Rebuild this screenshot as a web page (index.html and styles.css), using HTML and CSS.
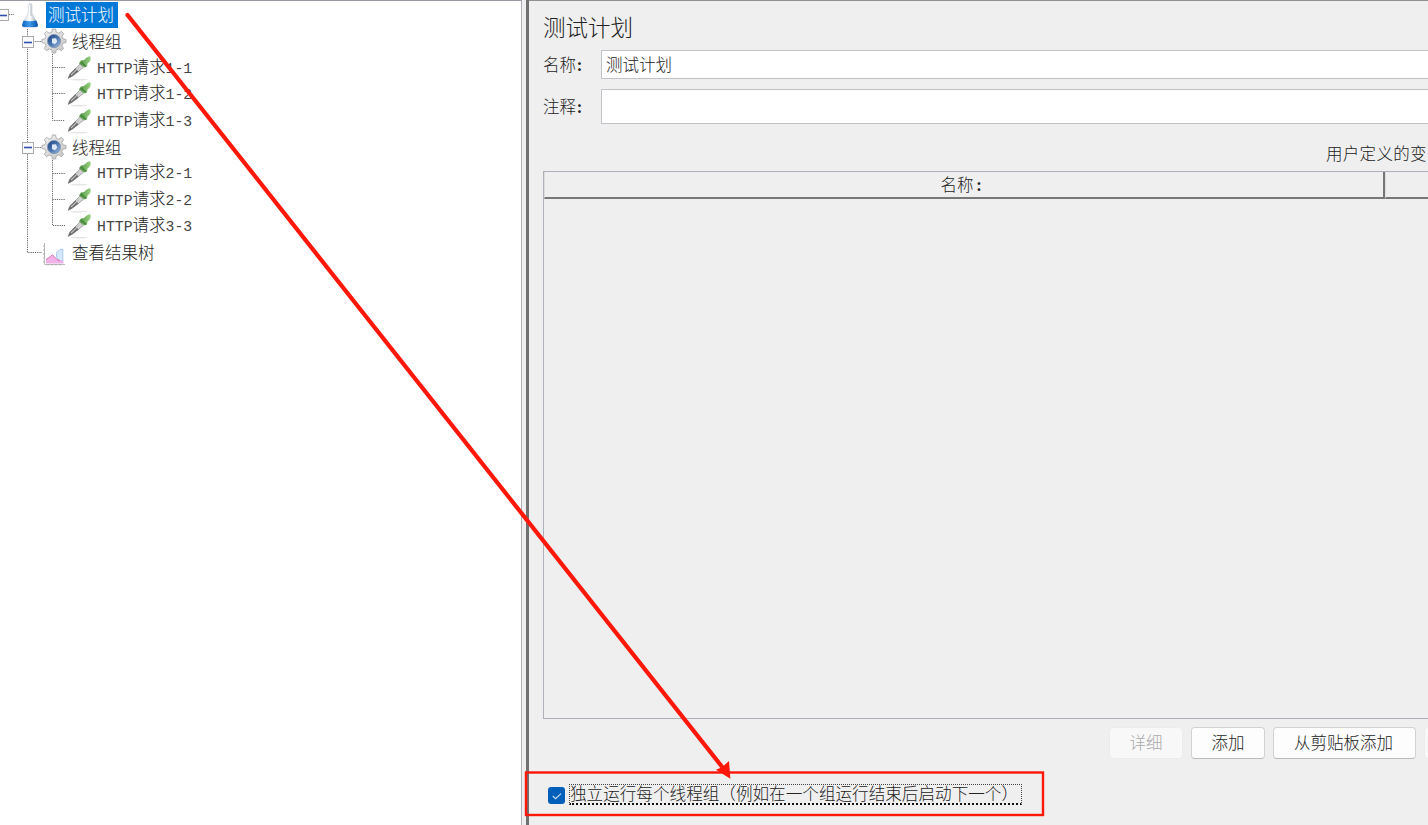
FILE: index.html
```html
<!DOCTYPE html>
<html lang="zh-CN">
  <head>
    <meta charset="UTF-8" />
    <meta name="viewport" content="width=device-width, initial-scale=1.0" />
    <title>测试计划</title>
    <link rel="stylesheet" href="styles.css">
  </head>
  <body>
    <!-- Shared icons -->
    <svg class="defs" width="0" height="0">
      <defs>
        <linearGradient id="glass" x1="0" x2="1">
          <stop offset="0" stop-color="#c9d5df" />
          <stop offset="0.5" stop-color="#fff" />
          <stop offset="1" stop-color="#8c9db0" />
        </linearGradient>
        <linearGradient id="liquid" x1="0" x2="1">
          <stop offset="0" stop-color="#1260bd" />
          <stop offset="0.45" stop-color="#3d9cec" />
          <stop offset="1" stop-color="#0b4fae" />
        </linearGradient>
        <linearGradient id="metal" x1="0" y1="0" x2="1" y2="1">
          <stop offset="0" stop-color="#f5f5f5" />
          <stop offset="1" stop-color="#c3c3c3" />
        </linearGradient>
        <linearGradient id="hub" x1="0" y1="0" x2="1" y2="1">
          <stop offset="0" stop-color="#1d3f7c" />
          <stop offset="0.5" stop-color="#4873ad" />
          <stop offset="1" stop-color="#a5bfe0" />
        </linearGradient>
        <linearGradient id="rubber" x1="0" x2="1">
          <stop offset="0" stop-color="#4c9140" />
          <stop offset="1" stop-color="#9bd283" />
        </linearGradient>
      </defs>
      <symbol id="flask" viewBox="0 0 18 26">
        <ellipse cx="9" cy="24.3" rx="8.5" ry="1.2" fill="#ccd" />
        <path d="M7.2 3V11L2.4 20Q.6 24.5 3 25H15Q17.4 24.5 15.6 20L11 11V3Z" fill="url(#glass)" stroke="#c5ced6" stroke-width=".6" />
        <path d="M2.6 18.5Q9 20 15.4 18.5L17 23Q17 25 15 25H3Q1 25 1 23Z" fill="url(#liquid)" />
        <path d="M8 1.5L11.2 2.5M10 3.5V14" stroke="#a4aeb8" stroke-width=".8" />
      </symbol>
      <symbol id="gear" viewBox="0 0 26 26">
        <path d="M10.8 4.2L11.4 1H14.6L15.2 4.2L17.8 5.2L20.4 3.4L22.7 5.6L20.8 8.3L21.9 10.8L25 11.4V14.6L21.9 15.2L20.8 17.8L22.6 20.4L20.4 22.7L17.8 20.9L15.2 21.9L14.6 25H11.4L10.8 21.9L8.2 20.9L5.6 22.7L3.3 20.4L5.1 17.8L4.1 15.2L1 14.6V11.4L4.1 10.8L5.1 8.2L3.3 5.6L5.6 3.4L8.2 5.2Z" fill="url(#metal)" stroke="#a9a9a9" stroke-width=".9" />
        <circle cx="13" cy="13" r="6.6" fill="url(#hub)" stroke="#8499b8" />
        <path d="M11 10.4L15 10.2L16.3 13.5L14 16.2L11 15Z" fill="#dfe9f6" />
      </symbol>
      <symbol id="dropper" viewBox="0 0 26 26">
        <ellipse cx="13" cy="24.6" rx="9" ry=".8" fill="#e6e6e6" />
        <path d="M14 9L17.4 12.4L6.6 21L2.2 23.4L3.8 19Z" fill="#d2d2d2" stroke="#999" stroke-width=".8" />
        <path d="M9.5 13.2L12.5 16.5L6.2 21.3L2 23.4L4 18.7Z" fill="#6a6a6a" />
        <path d="M5 20L13 12.4" stroke="#c4c4c4" stroke-width="1.1" />
        <path d="M19 4Q22.3.8 24.3 1.4Q25.6 4.5 23 7.2L21.5 8.6L21 11.6L18.2 12.6L13 8.2L15 5.4L18 5Z" fill="url(#rubber)" />
        <path d="M15 6.9L20 11.4" stroke="#43813a" stroke-width="1.4" />
      </symbol>
      <symbol id="chart" viewBox="0 0 24 24">
        <path d="M2.5 1V22.5H23" fill="none" stroke="#bbb" />
        <path d="M1 4H2.5M1 8H2.5M1 12H2.5M1 16H2.5M1 20H2.5M6 22V23.5M10 22V23.5M14 22V23.5M18 22V23.5" stroke="#aaa" />
        <path d="M14.5 14Q13.5 8 20.8 7V19Q15 19 14.5 14Z" fill="#d5e8fc" stroke="#97bfec" stroke-width=".8" />
        <path d="M4 21.5V17.5Q8 15 10.5 12.8L15 17.5L21.5 19V21.5Z" fill="#f0b2e7" />
        <path d="M4 17.5Q8 15 10.5 12.8L15 17.5L18 19" fill="none" stroke="#d678ac" />
      </symbol>
    </svg>

    <div class="window">
      <div class="tree-pane">
        <svg class="guides" width="100" height="270">
          <path d="M9 14.5H14M27.5 29V252.5H42M33 41.5H42M33 147.5H42M52.5 54V120.5H65M52.5 67.5H65M52.5 93.5H65M52.5 160V225.5H65M52.5 173.5H65M52.5 199.5H65" />
          <g class="toggle">
            <rect x="-2.5" y="9.5" width="11" height="11" /><path d="M0 15.5H7" />
            <rect x="22.5" y="36.5" width="11" height="11" /><path d="M24 42.5H32" />
            <rect x="22.5" y="142.5" width="11" height="11" /><path d="M24 147.5H32" />
          </g>
        </svg>
        <ul class="tree">
          <li class="node root"><svg><use href="#flask" /></svg><span class="label selected">测试计划</span></li>
          <li class="node group"><svg><use href="#gear" /></svg><span class="label">线程组</span></li>
          <li class="node request"><svg><use href="#dropper" /></svg><span class="label"><i>HTTP</i>请求<i>1-1</i></span></li>
          <li class="node request"><svg><use href="#dropper" /></svg><span class="label"><i>HTTP</i>请求<i>1-2</i></span></li>
          <li class="node request"><svg><use href="#dropper" /></svg><span class="label"><i>HTTP</i>请求<i>1-3</i></span></li>
          <li class="node group"><svg><use href="#gear" /></svg><span class="label">线程组</span></li>
          <li class="node request"><svg><use href="#dropper" /></svg><span class="label"><i>HTTP</i>请求<i>2-1</i></span></li>
          <li class="node request"><svg><use href="#dropper" /></svg><span class="label"><i>HTTP</i>请求<i>2-2</i></span></li>
          <li class="node request"><svg><use href="#dropper" /></svg><span class="label"><i>HTTP</i>请求<i>3-3</i></span></li>
          <li class="node result"><svg><use href="#chart" /></svg><span class="label">查看结果树</span></li>
        </ul>
      </div>

      <div class="divider"></div>

      <div class="main">
        <h1>测试计划</h1>
        <div class="field name">
          <span>名称<b>:</b></span>
          <div class="input">测试计划</div>
        </div>
        <div class="field comment">
          <span>注释<b>:</b></span>
          <div class="input"></div>
        </div>
        <div class="caption">用户定义的变</div>
        <div class="table">
          <div class="table-head">
            <div class="column first">名称<b>:</b></div>
            <div class="column"></div>
          </div>
        </div>
        <div class="buttons">
          <button disabled>详细</button>
          <button>添加</button>
          <button class="wide">从剪贴板添加</button>
          <button disabled></button>
        </div>
        <div class="option">
          <span class="check"><svg width="17" height="17"><path d="M4.8 9L7.6 11.6L13 6.6" /></svg></span>
          <span class="option-text">独立运行每个线程组（例如在一个组运行结束后启动下一个）</span>
        </div>
      </div>
    </div>

    <!-- Red annotation -->
    <svg class="annotation" width="1428" height="825">
      <path class="arrow" d="M127.5 15L723 768" />
      <path class="tip" d="M729 776.5L718.5 770L723 768L728 763.5Z" />
      <rect x="526" y="772.5" width="517" height="42.5" />
    </svg>
  </body>
</html>
```

FILE: styles.css
```css
* {
  box-sizing: border-box;
  margin: 0;
  padding: 0;
}

body {
  height: 825px;
  overflow: hidden;
  background-color: #efefef;
  color: #222;
  font-family: "Noto Sans CJK SC", sans-serif;
  font-size: 16.5px;
  font-weight: 300;
}

.defs {
  display: block;
}

.window {
  display: flex;
  width: 1428px;
  height: 825px;
}

/* Tree */

.tree-pane {
  display: grid;
  align-content: start;
  flex: 0 0 522px;
  background-color: #fff;
  border-top: 1px solid #999ba2;
  border-right: 1px solid #b0b2b8;
}

.guides,
.tree {
  grid-area: 1 / 1;
}

.guides {
  margin-top: -1px;
  fill: none;
  stroke: #666;
  stroke-dasharray: 1.2 1;
}

.toggle {
  fill: #fafafa;
  stroke: #aaa;
  stroke-dasharray: none;
}

.toggle path {
  stroke: #314fae;
  stroke-width: 1.6;
}

.tree {
  list-style: none;
  padding-top: 0.4px;
}

.node {
  display: flex;
  align-items: center;
  height: 26.4px;
}

.node svg {
  width: 26px;
  height: 26px;
  flex: none;
}

.label {
  padding-left: 5px;
  line-height: 24px;
  white-space: nowrap;
}

.label i {
  color: #444;
  font-family: "Liberation Mono", monospace;
  font-size: 14.8px;
  font-style: normal;
}

.root {
  padding-left: 21px;
}

.root svg {
  width: 18px;
  margin-right: 7px;
}

.selected {
  width: 72px;
  height: 26px;
  padding-left: 2px;
  background-color: #0078d7;
  color: #fff;
}

.group {
  padding-left: 41px;
}

.group svg {
  margin-top: 1px;
}

.request {
  padding-left: 66px;
}

.request svg {
  margin-top: 1px;
}

.result {
  padding-left: 42px;
}

.result svg {
  width: 24px;
  height: 24px;
  margin-right: 1px;
  margin-top: 3px;
}

/* Split handle */

.divider {
  flex: 0 0 7px;
  background-color: #eee;
  border-right: 3px solid #707070;
}

/* Plan editor */

.main {
  display: flex;
  flex-direction: column;
  flex: 1;
  min-width: 0;
  padding-left: 14px;
  border-top: 1px solid #909090;
}

b {
  display: inline-block;
  width: 10px;
  padding-left: 1px;
  font-size: 15px;
  font-weight: 700;
}

h1 {
  margin-top: 9px;
  height: 40px;
  line-height: 32px;
  font-size: 22.5px;
  font-weight: 300;
}

.field {
  display: flex;
  align-items: center;
}

.field span {
  width: 58px;
  flex: none;
  margin-top: -2px;
}

.input {
  flex: 1;
  height: 100%;
  padding-left: 4px;
  line-height: 27px;
  background-color: #fff;
  border: 1px solid #c2c3c8;
  border-right: none;
}

.name {
  height: 29px;
}

.comment {
  height: 35px;
  margin-top: 10px;
}

.caption {
  height: 47px;
  padding-left: 783px;
  line-height: 58px;
  letter-spacing: 0.3px;
  white-space: nowrap;
}

.table {
  height: 548px;
  border: 1px solid #aeb1b7;
  border-right: none;
}

.table-head {
  display: flex;
  height: 27px;
}

.column {
  flex: 1;
  border-bottom: 2px solid #777;
  border-left: 1px solid #ddd;
}

.first {
  flex: 0 0 841px;
  padding-right: 4px;
  border-right: 2px solid #777;
  line-height: 25px;
  text-align: center;
}

.buttons {
  display: flex;
  gap: 8px;
  height: 32px;
  margin-top: 8px;
  padding-left: 566px;
}

button {
  flex: none;
  width: 74px;
  padding-bottom: 3px;
  background-color: #fdfdfd;
  border: 1px solid #d2d2d2;
  border-bottom-color: #bbb;
  border-radius: 4px;
  color: #222;
  font: inherit;
  line-height: 26px;
}

button:disabled {
  background-color: #f8f8f8;
  border-color: #ececec;
  color: #aaa;
}

.wide {
  width: 143px;
  padding-right: 2px;
}

.option {
  display: flex;
  align-items: center;
  margin-top: 25px;
  padding-left: 5px;
}

.check {
  width: 17px;
  height: 17px;
  margin-right: 4px;
  margin-top: 1px;
  background-color: #005fb8;
  border-radius: 3px;
}

.check svg {
  display: block;
  fill: none;
  stroke: #c5ddf3;
  stroke-width: 1.2;
}

.option-text {
  width: 453px;
  height: 21px;
  border: 1px dotted #444;
  border-bottom: 2px dotted #111;
  font-size: 16.6px;
  line-height: 17px;
  white-space: nowrap;
}

/* Arrow and frame drawn over both panes */

.annotation {
  position: absolute;
  top: 0;
  left: 0;
  fill: none;
  stroke: #ff1709;
  stroke-width: 2.4;
  pointer-events: none;
}

.arrow {
  stroke-width: 4.2;
  stroke-linecap: round;
}

.tip {
  fill: #ff1709;
}
```
